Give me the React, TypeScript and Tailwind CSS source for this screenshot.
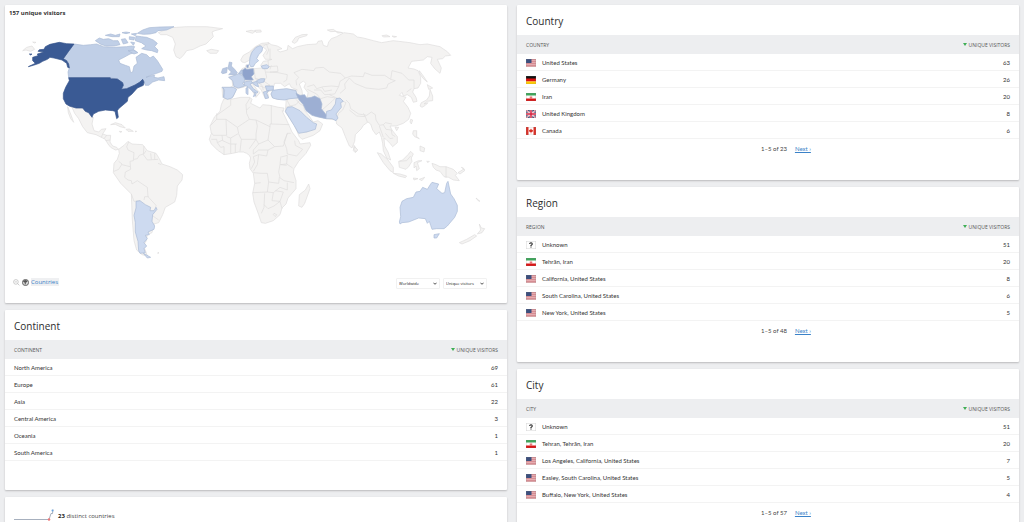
import type { ReactNode } from "react";

type FlagName = "us" | "de" | "ir" | "gb" | "ca" | "unknown";

type Row = { label: string; value: number; flag?: FlagName };

const continents: Row[] = [
  { label: "North America", value: 69 },
  { label: "Europe", value: 61 },
  { label: "Asia", value: 22 },
  { label: "Central America", value: 3 },
  { label: "Oceania", value: 1 },
  { label: "South America", value: 1 },
];

const countries: Row[] = [
  { label: "United States", value: 63, flag: "us" },
  { label: "Germany", value: 26, flag: "de" },
  { label: "Iran", value: 20, flag: "ir" },
  { label: "United Kingdom", value: 8, flag: "gb" },
  { label: "Canada", value: 6, flag: "ca" },
];

const regions: Row[] = [
  { label: "Unknown", value: 51, flag: "unknown" },
  { label: "Tehrān, Iran", value: 20, flag: "ir" },
  { label: "California, United States", value: 8, flag: "us" },
  { label: "South Carolina, United States", value: 6, flag: "us" },
  { label: "New York, United States", value: 5, flag: "us" },
];

const cities: Row[] = [
  { label: "Unknown", value: 51, flag: "unknown" },
  { label: "Tehran, Tehrān, Iran", value: 20, flag: "ir" },
  { label: "Los Angeles, California, United States", value: 7, flag: "us" },
  { label: "Easley, South Carolina, United States", value: 5, flag: "us" },
  { label: "Buffalo, New York, United States", value: 4, flag: "us" },
];

function Flag({ name }: { name: FlagName }) {
  return (
    <svg viewBox="0 0 20 16" className="block h-2 w-[10px]" aria-hidden="true">
      {name === "us" && (
        <>
          <rect width="20" height="16" fill="#e6acb0" />
          <path d="M0 1h20M0 5h20M0 9h20M0 13h20" stroke="#d68d93" strokeWidth="2" />
          <rect width="11" height="8" fill="#3c4f7d" />
        </>
      )}
      {name === "de" && (
        <>
          <rect width="20" height="6" fill="#111" />
          <rect y="5" width="20" height="6" fill="#dd1111" />
          <rect y="11" width="20" height="5" fill="#fc0" />
        </>
      )}
      {name === "ir" && (
        <>
          <rect width="20" height="16" fill="#fff" />
          <rect width="20" height="5" fill="#3ea55a" />
          <rect y="11" width="20" height="5" fill="#da1515" />
          <path d="M10 5.500v5M8 7.500q0 3 2 3t2-3" stroke="#da3a3a" strokeWidth="1.300" fill="none" />
        </>
      )}
      {name === "gb" && (
        <>
          <rect width="20" height="16" fill="#344673" />
          <path d="M0 0l20 16M20 0L0 16" stroke="#fff" strokeWidth="3" />
          <path d="M0 0l20 16M20 0L0 16" stroke="#d8415a" strokeWidth="1.500" />
          <path d="M10 0v16M0 8h20" stroke="#fff" strokeWidth="5" />
          <path d="M10 0v16M0 8h20" stroke="#d5213f" strokeWidth="3" />
        </>
      )}
      {name === "ca" && (
        <>
          <rect width="20" height="16" fill="#fff" />
          <path d="M0 0h5v16H0zM15 0h5v16h-5z" fill="#d93128" />
          <path d="M10 3l1.500 2.500L14 6l-1 4-2.500.500V13h-1v-2.500L7 10 6 6l2.500-.500z" fill="#d93128" />
        </>
      )}
      {name === "unknown" && (
        <>
          <rect x=".5" y=".5" width="19" height="15" fill="#fff" stroke="#d5d5d5" />
          <path d="M7.500 6q0-2.500 2.500-2.500T12.500 6q0 1.300-2.500 2.800v1M10 11v2" stroke="#222" strokeWidth="2.200" fill="none" />
        </>
      )}
      {name !== "unknown" && (
        <rect x=".5" y=".5" width="19" height="15" fill="none" stroke="#888" strokeOpacity=".3" />
      )}
    </svg>
  );
}

function Card({ children }: { children: ReactNode }) {
  return (
    <section className="rounded-[1px] bg-white shadow-[0_1px_2px_rgba(0,0,0,0.22)]">{children}</section>
  );
}

function Report({ title, rows, total }: { title: string; rows: Row[]; total?: number }) {
  return (
    <Card>
      <h2 className="flex h-[30px] items-center px-[9px] pt-[2px] text-[10px] leading-4 text-[#2d2d2d]">{title}</h2>
      <table className="w-full border-separate border-spacing-0 text-[6px] leading-2 text-[#333]">
        <thead>
          <tr className="h-[19px] bg-[#edeef0] text-[5px] text-[#555]">
            <th scope="col" className="px-[9px] py-0 text-left font-normal uppercase">
              {title}
            </th>
            <th scope="col" className="px-[9px] py-0 font-normal uppercase">
              <span className="flex items-center justify-end gap-[2px]">
                <svg viewBox="0 0 8 6" className="h-[3px] w-1" aria-hidden="true">
                  <path d="M0 0h8L4 6z" fill="#3fae55" />
                </svg>
                Unique visitors
              </span>
            </th>
          </tr>
        </thead>
        <tbody className="font-['Lato','Open_Sans',sans-serif]">
          {rows.map((row) => (
            <tr key={row.label} className="h-[17px]">
              <td className="border-b border-[#f3f3f3] px-[9px] pt-[2px] pb-0">
                <span className="flex items-center gap-[6px]">
                  {row.flag && <Flag name={row.flag} />}
                  {row.label}
                </span>
              </td>
              <td className="border-b border-[#f3f3f3] px-[9px] pt-[2px] pb-0 text-right">{row.value}</td>
            </tr>
          ))}
        </tbody>
      </table>
      {total ? (
        <nav aria-label={`${title} pages`} className="flex h-[41px] justify-center gap-2 pt-[6px] pl-9 font-['Lato','Open_Sans',sans-serif] text-[6px] leading-2 text-[#444]">
          <span>1–5 of {total}</span>
          <a href="#next" className="text-[#3b82c8] underline">
            Next ›
          </a>
        </nav>
      ) : (
        <div className="h-[29px]" />
      )}
    </Card>
  );
}

function WorldMap() {
  return (
    <svg viewBox="15 60 1506 750" className="block w-full" role="img" aria-label="World map of unique visitors">
      <g fill="#f4f3f2" stroke="#dedddc" strokeWidth="2" strokeLinejoin="round">
        {/* Greenland, Chukotka, Mexico and the Caribbean */}
        <path d="M475 98L490 92 502 84 530 82 560 80 620 80 668 86 645 92 636 96 640 110 628 122 618 132 600 138 580 148 560 152 550 166 540 176 528 170 521 150 526 132 518 112 500 104 482 104Z" />
        <path d="M68 152L80 142 96 138 104 148 92 154 78 150ZM98 126L108 127 103 129Z" />
        <path d="M208 318L228 324 248 324 256 334 266 338 276 352 280 352 276 372 282 392 296 396 304 388 318 386 308 402 320 406 332 406 330 426 338 438 350 442 356 448 346 450 332 442 324 432 316 418 300 410 288 404 262 398 248 380 236 356 224 340 216 322Z" />
        <path d="M203 320L212 342 221 367 212 356 205 338ZM332 374L346 368 366 374 376 384 360 380 346 373ZM378 388L388 387 400 394 384 394ZM358 394L366 395 360 397ZM406 393L410 394 407 396Z" />
        <path d="M308 402L304 412M320 406L312 416M330 420L316 422" fill="none" />

        {/* South America */}
        <g transform="translate(180 360)">
          <path d="M176 88L192 76 204 64 216 72 248 74 262 92 288 100 298 116 306 132 330 140 352 150 368 164 366 180 352 198 350 226 344 246 316 262 308 284 296 308 282 312 276 338 262 344 258 364 250 376 258 396 262 408 246 404 230 390 222 362 217 300 214 222 182 190 160 158 162 130 172 118 178 100ZM294 397L297 399 293 400Z" />
          <path d="M206 66L200 80 204 90 222 98 220 122 210 124 212 148 196 156 194 172 204 180 214 182 216 192M222 118L232 116 238 106 250 102 252 78M258 92L250 104 262 120 294 118M272 100L274 118M284 100L284 118M216 192L232 182 262 202 264 230 288 256 286 266M214 222L222 244 240 242M252 240L254 230 266 230M176 124L186 132 176 148 162 154M186 134L210 140M294 130L304 134M276 286L296 300" fill="none" />
        </g>

        {/* Europe and Asia */}
        <g transform="translate(570 0)">
          <path d="M218 140L235 128 244 134 262 138 276 146 262 150 270 156 292 150 294 136 308 146 322 140 350 134 380 132 384 124 396 122 400 136 412 140 416 126 424 116 440 110 462 98 490 102 502 111 520 114 550 122 575 128 610 122 660 128 690 134 712 132 750 140 772 155 782 166 766 168 758 176 742 178 754 204 750 220 734 206 722 190 726 172 712 170 700 180 665 184 654 204 672 207 684 212 692 230 692 250 684 264 672 266 668 276 678 292 681 304 670 307 664 292 652 284 640 288 636 277 628 286 648 292 640 304 654 322 662 340 656 358 640 370 618 378 600 378 606 390 622 410 622 428 608 440 600 430 588 418 582 414 584 438 594 456 602 480 590 474 580 452 578 430 574 412 568 396 558 404 548 390 542 372 534 366 520 376 514 386 496 404 494 424 486 444 478 438 466 410 456 384 440 372 438 360 408 356 380 348 364 334 348 326 340 312 344 332 356 346 370 366 384 362 398 372 390 392 370 406 336 418 328 410 312 374 286 336 288 308 288 298 262 298 246 292 243 282 250 270 232 276 236 290 226 296 220 284 214 270 200 256 188 250 200 268 210 278 198 292 185 270 172 256 160 262 146 264 138 268 130 290 112 298 98 292 96 262 120 262 128 258 126 240 116 232 134 226 150 220 156 206 166 202 168 194 176 196 178 204 192 206 216 204 212 196 220 184 234 182 246 178 226 178 219 166 230 150Z" />
          <path d="M152 180L160 166 178 156 196 140 215 130 236 128 236 132 210 137 194 144 182 160 180 180 164 188 156 186Z" />
          <path d="M50 152L64 148 86 152 80 160 60 160ZM168 94L184 91 196 94 188 100 178 97ZM194 91L212 90 214 96 198 97ZM306 126L316 112 336 104 352 103 350 107 326 114 322 124 314 130ZM412 90L430 88 438 94 422 95ZM438 94L458 98 442 99Z" />
          <path d="M576 107L590 105 600 110 580 111ZM606 108L620 110 612 112ZM688 212L700 228 712 246 700 236 690 222ZM712 254L728 264 716 268ZM720 268L728 288 728 302 712 304 702 312 714 308 706 316 696 322 690 318 694 308 710 300 718 288ZM662 358L668 360 664 372 660 366ZM615 382L626 382 620 392ZM670 392L680 392 680 410 688 416 674 410 668 402ZM690 438L704 444 702 456 690 452ZM492 436L502 450 496 458 490 452Z" />
          <path d="M230 164L236 150 230 134M240 146L240 180M234 182L236 204 224 206 230 232 222 244 196 236M236 200L262 198 264 214 240 216M228 216L264 218 292 224 290 240 280 246M240 208L244 196M192 206L196 236M222 244L240 256 226 258M196 236L222 240M320 256L318 242 326 232 312 218 336 208 372 212 376 204 400 202 418 216 452 220 466 234 450 244 446 260 424 258 400 260 380 266 372 254 352 260M372 270L392 270 404 284 434 282 446 260M396 262L404 274 426 270M352 268L380 282 392 296M418 284L436 292 456 302M392 296L412 290 436 294 426 304 410 318 398 328 388 346" fill="none" />
          <path d="M466 234L484 228 520 230 524 218 546 226 584 226 602 238 616 242 594 252 590 264 566 268 528 264 494 250 478 234M478 234L464 252 466 266 450 280M602 238L606 212 636 220 656 240 672 240 672 266M468 300L478 310 482 326 506 342 530 346 544 336 556 344 558 360 568 376 580 374 586 368 606 372M478 330L500 348 526 350 520 340M526 350L532 366M568 378L576 400 580 412M580 374L588 388 604 390 606 404 616 410M586 400L600 416 610 414M650 276L664 266M456 302L468 308 458 330 446 340 438 360" fill="none" />
          <path d="M290 298L300 318 318 314 330 300M300 318L288 322M318 298L330 312 342 318M326 390L350 396 380 372M236 258L250 262M206 248L216 256 220 270M210 258L226 264" fill="none" />
          <path d="M248 268L254 250 272 250 284 260 298 251 304 262 322 270 290 267 268 270 254 274ZM328 252L340 243 347 250 342 262 354 278 352 292 338 288 336 272Z" fill="#fff" />
        </g>

        {/* Africa */}
        <g transform="translate(600 210)">
          <path d="M72 86L92 88 122 82 150 82 156 88 152 100 168 108 180 114 188 104 210 106 236 112 252 114 250 124 246 122 256 142 268 168 276 186 296 212 300 222 330 218 332 226 318 250 296 274 282 296 280 306 288 332 288 356 264 384 258 402 246 414 240 434 220 452 196 460 184 458 176 434 162 396 158 370 164 340 160 310 150 296 148 280 152 264 148 256 140 250 130 246 116 246 98 250 72 254 52 240 34 222 28 208 34 190 30 168 44 140 60 124 64 104Z" />
          <path d="M326 342L330 356 314 400 306 412 296 408 298 374 316 360ZM464 230L473 240 468 246 462 238Z" />
          <path d="M92 88L92 106 50 136M50 130L50 148 32 166M50 148L78 148 80 196 40 196 34 188M78 148L112 172 148 148 140 130 138 104 150 84M140 120L150 110M148 148L168 150 210 170 210 162 214 162 214 106M214 162L268 164M112 172L116 190 92 204 80 200M116 192L124 208 168 208 168 192 172 168 168 150M124 208L120 244M92 204L92 222 110 222M92 222L92 250M106 222L106 248M68 210L52 218 62 232 72 230 72 254M34 208L50 208 52 218M66 196L68 212 90 222M168 208L148 236M168 208L176 222 160 240 160 252M176 222L204 210 210 170M204 210L224 230 250 228 262 190 272 190M262 190L252 216 260 236 262 252 290 258 308 238 286 226 284 212M224 230L204 240 176 240 160 252M204 240L200 258 176 254 160 260 164 276 154 296M176 254L172 284 160 304M240 262L262 256 260 282 240 284 242 264M240 284L236 306 240 322M260 282L278 294M242 284L260 286M160 308L184 310 202 310 206 336 236 340 238 322 252 332 282 338M206 336L202 366 158 368M202 366L220 368 240 352 262 360 262 338M194 370L192 412 184 430M192 404L204 416 222 408 240 394 250 366 226 362M220 368L216 392 240 394M240 394L246 416M222 430L230 434 226 440 220 434ZM164 340L182 338" fill="none" />
        </g>

        {/* Indonesia, New Guinea and New Zealand */}
        <g transform="translate(1020 390)">
          <path d="M176 94L188 90 204 74 212 64 220 72 214 84 216 94 206 110 198 118 178 112ZM112 68L124 72 144 90 160 112 160 128 150 122 130 98ZM160 130L180 132 200 138 196 143 176 138ZM222 98L236 92 246 92 232 98 238 116 230 122 228 108 222 114ZM260 94L268 94 264 98ZM220 144L234 146 222 150ZM238 148L254 142 246 152ZM276 100L288 104 300 110 318 110 340 118 352 130 346 136 358 152 340 150 326 142 312 140 300 124 288 120 280 112ZM354 128L370 118 374 122 360 132ZM364 112L374 120 370 114Z" />
          <path d="M318 110L318 144M178 94L200 92 212 78" fill="none" />
          <path d="M358 338L380 328 404 314 410 318 390 332 366 342ZM412 312L422 300 418 282 424 294 434 296 426 308ZM408 204L420 214 414 212Z" />
        </g>
      </g>

      {/* Countries with visitors */}
      <g stroke="#a9b9d4" strokeWidth="2" strokeLinejoin="round">
        <g fill="#c0cfe7">
          <path d="M222 132L250 136 272 134 290 132 310 140 340 142 380 140 395 138 404 140 400 148 410 156 390 162 372 172 356 180 360 190 376 196 388 200 392 218 398 216 402 198 412 190 408 172 425 160 440 164 450 174 460 168 472 182 488 208 486 214 470 220 452 226 438 232 450 228 464 226 462 232 474 234 492 230 494 242 476 240 458 246 446 256 436 256 432 246 428 238 420 246 405 255 380 266 364 268 370 256 368 248 352 237 330 233 206 233 204 216 208 204 204 184 190 176 205 155Z" />
          <path d="M286 122L298 114 310 118 326 116 340 122 354 122 360 134 342 138 320 138 304 134ZM412 100L428 90 448 83 480 81 522 80 500 90 474 92 468 98 450 102 430 103ZM408 108L424 110 440 112 460 120 472 130 464 140 474 150 472 158 455 152 440 150 425 146 438 138 424 128 406 122ZM316 106L332 102 346 106 360 102 358 110 336 110ZM364 118L376 116 384 128 370 132ZM388 110L404 112 402 120 388 118ZM366 98L378 96 390 98 378 101ZM384 152L400 150 414 158 402 162ZM394 102L410 100 406 107ZM392 126L404 128 400 136Z" />
        </g>
        <g fill="#3a5a94" stroke="#345189">
          <path d="M98 172L114 167 112 162 132 156 114 154 118 149 132 148 136 140 150 133 178 127 200 131 222 132 205 155 190 176 200 182 206 192 208 204 203 202 200 190 186 180 162 174 150 172 142 178 128 184 118 190 100 196 85 200 106 190 98 182ZM88 162L96 162 92 165Z" />
          <path d="M206 233L330 233 334 236 352 237 368 248 370 256 364 268 380 266 405 255 420 246 428 238 432 246 430 256 412 264 396 282 384 292 382 304 356 326 352 332 355 352 350 356 345 334 338 332 316 330 296 334 280 342 276 352 266 338 256 334 248 324 228 324 208 318 198 312 190 296 190 280 197 262 208 242Z" />
        </g>
        <path transform="translate(180 360)" fill="#cddaf0" d="M228 244L240 242 256 254 272 262 270 272 282 272 288 262 291 268 278 284 276 304 284 318 282 328 264 336 268 344 256 346 262 356 252 368 260 378 252 386 256 398 240 400 236 392 234 364 226 336 226 308 222 286 228 264ZM250 400L258 404 272 412 262 414Z" />
        <g transform="translate(570 0)" fill="#cddaf0">
          <path d="M178 192L180 172 186 156 198 142 210 137 218 142 216 154 206 164 200 176 206 182 196 190 190 200 182 200ZM214 198L230 194 238 200 232 206 218 206Z" />
          <path fill="#b9c8e2" d="M118 186L126 188 124 198 134 208 142 218 136 224 116 224 124 216 114 206ZM94 218L98 206 112 202 110 218 98 221ZM146 220L154 210 160 210 160 224Z" />
          <path fill="#c7d5ec" d="M116 232L134 226 146 221 162 230 164 242 158 250 164 258 146 264 132 260 128 242Z" />
          <path d="M96 262L130 262 140 268 132 284 126 294 112 298 100 292 104 270ZM100 264L102 292" />
          <path fill="#8fa3cc" d="M158 210L166 204 170 208 190 206 192 222 184 230 190 240 166 240 158 226ZM170 196L176 194 174 204 170 202Z" />
          <path fill="#c7d5ec" d="M162 246L184 242 186 250 180 252 190 266 204 276 200 280 194 276 198 286 190 290 194 280 174 260 164 256ZM168 264L174 262 174 284 168 280ZM200 242L212 236 224 236 222 246 206 250ZM186 248L200 244 206 260 198 258ZM226 258L250 258 250 270 230 272ZM220 276L236 272 230 280 236 294 226 296Z" />
          <path fill="#c9d7ee" d="M243 282L248 271 270 268 290 266 318 272 324 294 300 296 284 300 262 298 248 294Z" />
          <path fill="#9dafd3" d="M318 280L330 286 344 284 350 294 364 292 374 288 390 296 396 312 394 326 410 346 408 356 380 350 366 346 348 332 340 314 326 298Z" />
          <path d="M410 334L424 330 436 312 438 296 450 294 460 304 452 308 454 322 438 342 444 354 438 362 426 356 408 356Z" />
          <path d="M286 334L292 322 306 320 330 332 350 352 370 368 380 372 376 388 350 396 326 400 312 376Z" />
        </g>
        <path transform="translate(1020 390)" fill="#cddaf0" d="M178 276L182 260 180 232 186 214 200 206 220 202 228 186 240 184 248 172 262 178 272 162 276 157 296 162 290 176 306 190 314 188 320 160 324 154 332 192 342 206 352 226 352 244 344 262 322 288 312 296 290 296 276 298 272 286 268 274 262 280 256 266 236 264 206 276 186 278 180 282ZM282 314L298 311 290 324 282 324Z" />
      </g>
    </svg>
  );
}

function MapSelect({ label, value }: { label: string; value: string }) {
  return (
    <span className="grid items-center rounded-[1px] border border-[#f1f1f1]">
      <select
        aria-label={label}
        className="col-start-1 row-start-1 h-[9px] w-[42px] appearance-none bg-transparent pl-[2px] text-[4px] leading-2 text-[#222]"
      >
        <option>{value}</option>
      </select>
      <svg viewBox="0 0 10 6" className="pointer-events-none col-start-1 row-start-1 mr-[2px] h-[3px] w-1 justify-self-end" aria-hidden="true">
        <path d="M1 1l4 4 4-4" fill="none" stroke="#222" strokeWidth="2" />
      </svg>
    </span>
  );
}

function VisitorMap() {
  return (
    <Card>
      <h2 className="px-1 pt-[3px] pb-px text-[6px] leading-[11px] font-bold text-[#333]">157 unique visitors</h2>
      <WorldMap />
      <div className="flex items-start justify-between pt-2 pr-5 pb-[14px] pl-[8px]">
        <div className="flex items-center gap-[2px]">
          <button type="button" aria-label="Zoom out" className="block">
            <svg viewBox="0 0 24 24" className="block h-[7px] w-[7px]" fill="none" stroke="#aaa" strokeWidth="2">
              <circle cx="10" cy="10" r="8" />
              <path d="M6 10h8M16 16l6 6" />
            </svg>
          </button>
          <svg viewBox="0 0 24 24" className="block h-[7px] w-[7px]" aria-hidden="true">
            <circle cx="12" cy="12" r="10.500" fill="#ddd" stroke="#555" strokeWidth="3" />
            <path d="M5 6l6-3 8 3-2 5-4 1v6l-3 2-1-8-5-2z" fill="#555" />
          </svg>
          <a href="#countries" className="bg-[#eff0f2] pr-px text-[6px] leading-2 text-[#3b82c8]">
            Countries
          </a>
        </div>
        <div className="flex gap-[3px]">
          <MapSelect label="Area" value="Worldwide" />
          <MapSelect label="Metric" value="Unique visitors" />
        </div>
      </div>
    </Card>
  );
}

function DistinctCountries() {
  return (
    <Card>
      <div className="flex items-center gap-1 px-[9px] pt-[12px] pb-3 text-[6px] leading-[14px] text-[#444]">
        <svg viewBox="0 0 80 28" className="block h-[14px] w-10" aria-hidden="true">
          <path d="M0 21h70l4-12h3l1-8" fill="none" stroke="#8a96a8" strokeWidth="1.500" />
          <circle cx="70" cy="21" r="2.500" fill="#ee7777" />
          <circle cx="77" cy="3" r="2" fill="#6aa5e0" />
        </svg>
        <p>
          <strong className="text-[#222]">23</strong> distinct countries
        </p>
      </div>
    </Card>
  );
}

export default function App() {
  return (
    <main className="grid min-h-screen grid-cols-2 items-start gap-[10px] bg-[#edeef0] p-[5px] font-['Open_Sans','Noto_Sans',sans-serif]">
      <div className="flex flex-col gap-[7px]">
        <VisitorMap />
        <Report title="Continent" rows={continents} />
        <DistinctCountries />
      </div>
      <div className="flex flex-col gap-[7px]">
        <Report title="Country" rows={countries} total={23} />
        <Report title="Region" rows={regions} total={48} />
        <Report title="City" rows={cities} total={57} />
      </div>
    </main>
  );
}
